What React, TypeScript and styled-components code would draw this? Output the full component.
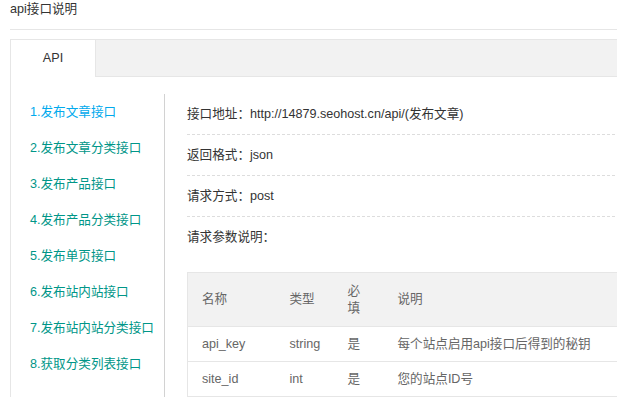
import React from 'react';
import styled, { createGlobalStyle } from 'styled-components';

const GlobalStyle = createGlobalStyle`
  html, body {
    margin: 0;
    padding: 0;
    background: #fff;
    overflow: hidden;
  }
  body {
    font-family: "Liberation Sans", "Noto Sans CJK SC", sans-serif;
    font-size: 12.6px;
    color: #333;
  }
`;

interface ApiLink {
  id: number;
  label: string;
}

interface Param {
  name: string;
  type: string;
  required: string;
  desc: string;
}

const API_LINKS: ApiLink[] = [
  { id: 1, label: '发布文章接口' },
  { id: 2, label: '发布文章分类接口' },
  { id: 3, label: '发布产品接口' },
  { id: 4, label: '发布产品分类接口' },
  { id: 5, label: '发布单页接口' },
  { id: 6, label: '发布站内站接口' },
  { id: 7, label: '发布站内站分类接口' },
  { id: 8, label: '获取分类列表接口' },
];

const PARAMS: Param[] = [
  { name: 'api_key', type: 'string', required: '是', desc: '每个站点启用api接口后得到的秘钥' },
  { name: 'site_id', type: 'int', required: '是', desc: '您的站点ID号' },
];

const Page = styled.div`
  width: 760px;
  padding: 0 0 0 10px;
`;

const PageTitle = styled.div`
  line-height: 19px;
  height: 29px;
  border-bottom: 1px solid #e6e6e6;
`;

const TabBox = styled.div`
  margin-top: 9px;
  border-top: 1px solid #e6e6e6;
  border-left: 1px solid #e6e6e6;
`;

const TabHeader = styled.div`
  display: flex;
  height: 36px;
  background: #f2f2f2;
  border-bottom: 1px solid #e6e6e6;
`;

const TabItem = styled.div<{ active?: boolean }>`
  width: 85px;
  height: 37px;
  line-height: 36px;
  text-align: center;
  color: #333;
  background: ${p => (p.active ? '#fff' : 'transparent')};
  border-right: 1px solid #e6e6e6;
  box-sizing: border-box;
`;

const TabBody = styled.div`
  display: flex;
  padding-top: 17px;
`;

const Sidebar = styled.ul`
  list-style: none;
  margin: 0;
  padding: 0 0 0 19px;
  width: 134px;
  border-right: 1px solid #d2d2d2;
`;

const SideLink = styled.li<{ current?: boolean }>`
  height: 36px;
  line-height: 36px;
  white-space: nowrap;
  color: ${p => (p.current ? '#01AAED' : '#009688')};
  cursor: pointer;
`;

const Content = styled.div`
  flex: 1;
  padding-left: 22px;
`;

const InfoRow = styled.div<{ last?: boolean }>`
  height: 40px;
  line-height: 40px;
  border-bottom: ${p => (p.last ? 'none' : '1px dashed #ddd')};
`;

const ParamTable = styled.table`
  margin-top: 15px;
  width: 540px;
  border-collapse: collapse;
  table-layout: fixed;
  color: #666;
  line-height: 17px;
  border-left: 1px solid #e6e6e6;
  border-top: 1px solid #e6e6e6;
`;

const HeadCell = styled.th`
  background: #f2f2f2;
  font-weight: normal;
  text-align: left;
  padding: 9.5px 14px;
  border-bottom: 1px solid #e6e6e6;
`;

const Cell = styled.td`
  padding: 8.5px 14px;
  border-bottom: 1px solid #e6e6e6;
  white-space: nowrap;
`;

export default function App() {
  return (
    <Page>
      <GlobalStyle />
      <PageTitle>api接口说明</PageTitle>
      <TabBox>
        <TabHeader>
          <TabItem active>API</TabItem>
        </TabHeader>
        <TabBody>
          <Sidebar>
            {API_LINKS.map(link => (
              <SideLink key={link.id} current={link.id === 1}>
                {link.id}.{link.label}
              </SideLink>
            ))}
          </Sidebar>
          <Content>
            <InfoRow>接口地址：http://14879.seohost.cn/api/(发布文章)</InfoRow>
            <InfoRow>返回格式：json</InfoRow>
            <InfoRow>请求方式：post</InfoRow>
            <InfoRow last>请求参数说明：</InfoRow>
            <ParamTable>
              <colgroup>
                <col style={{ width: 88 }} />
                <col style={{ width: 58 }} />
                <col style={{ width: 50 }} />
                <col />
              </colgroup>
              <thead>
                <tr>
                  <HeadCell>名称</HeadCell>
                  <HeadCell>类型</HeadCell>
                  <HeadCell>必填</HeadCell>
                  <HeadCell>说明</HeadCell>
                </tr>
              </thead>
              <tbody>
                {PARAMS.map(p => (
                  <tr key={p.name}>
                    <Cell>{p.name}</Cell>
                    <Cell>{p.type}</Cell>
                    <Cell>{p.required}</Cell>
                    <Cell>{p.desc}</Cell>
                  </tr>
                ))}
              </tbody>
            </ParamTable>
          </Content>
        </TabBody>
      </TabBox>
    </Page>
  );
}
